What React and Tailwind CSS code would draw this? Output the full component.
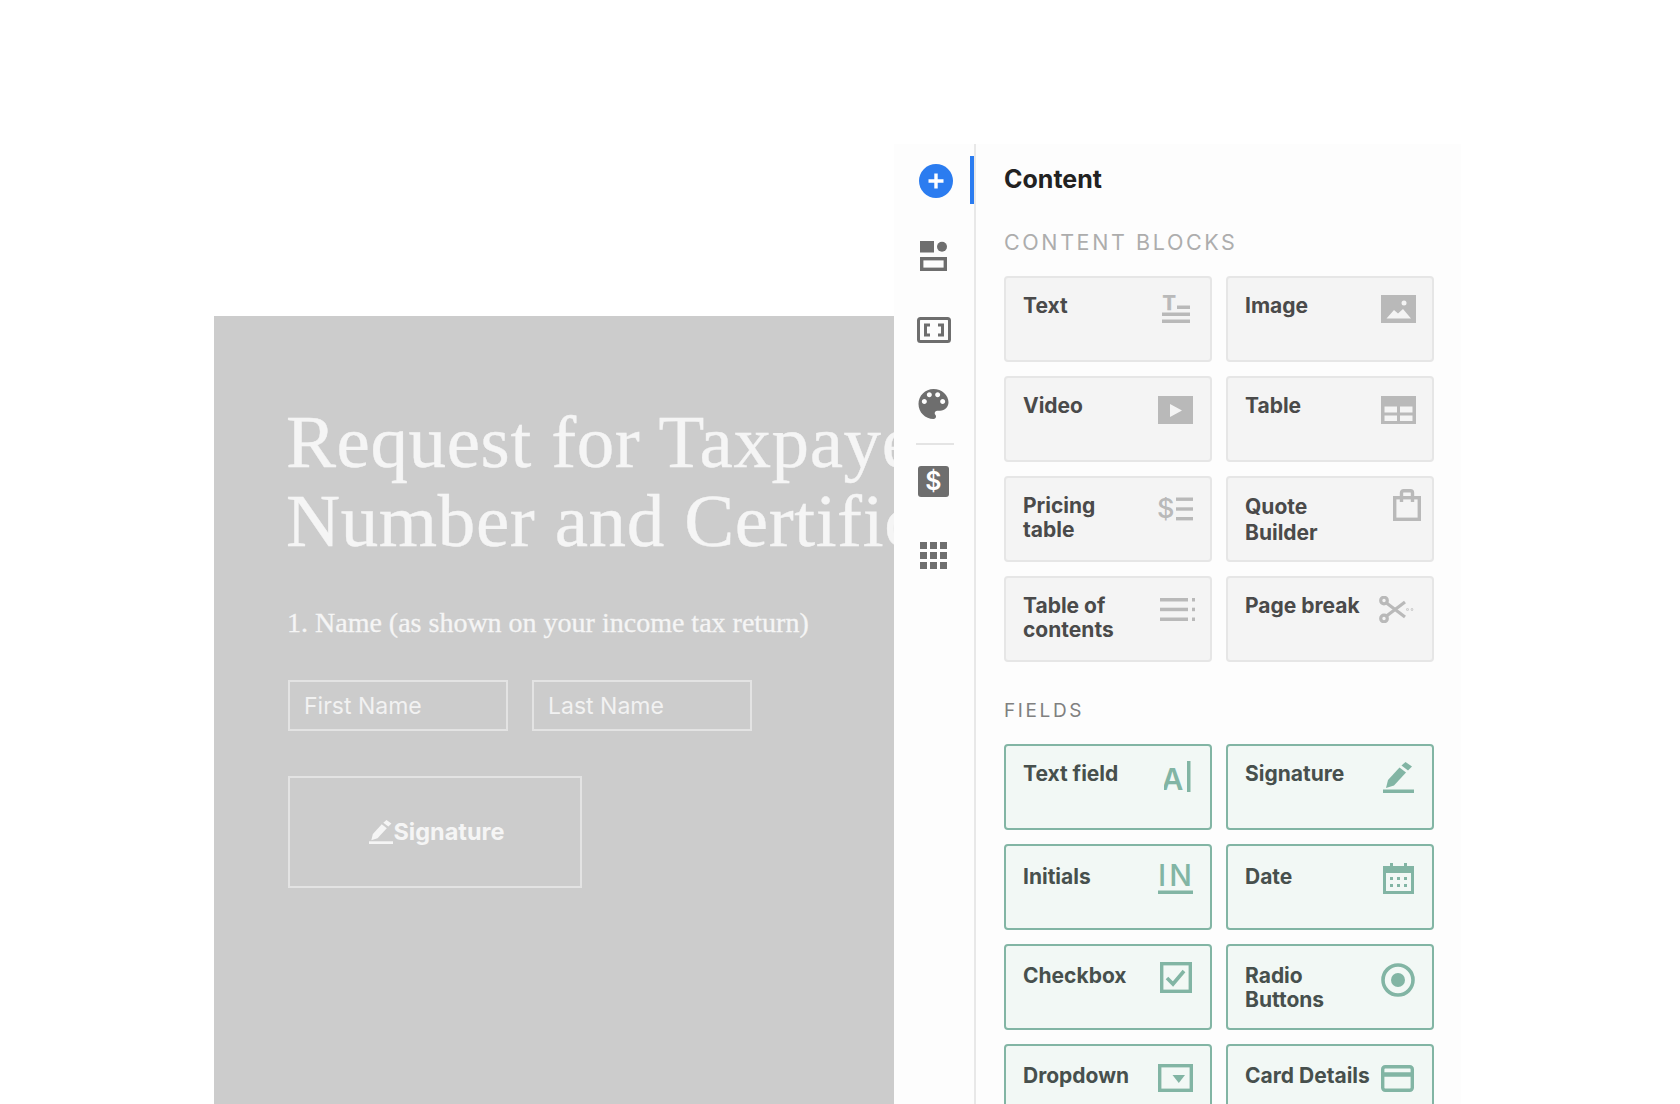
import React from "react";

const GRAY = "#b9b9b9";
const GREEN = "#82b5a4";
const SIDE = "#6e6e6e";
const CARD_BG = "#f4f4f4";
const GREEN_BG = "#f2f8f5";
const ui = "font-['Inter',sans-serif]";

const TextIcon = () => (
  <svg className="mt-[17px] mr-[20px] w-[28px] h-[28px] shrink-0" viewBox="0 0 28 28">
    <text x="0.5" y="14.5" fontSize="20" fontWeight="700" fontFamily="Inter" fill={GRAY} stroke={GRAY} strokeWidth="0.6">T</text>
    <rect x="15" y="10.5" width="13" height="3.5" fill={GRAY} />
    <rect y="17.5" width="28" height="3.5" fill={GRAY} />
    <rect y="24.5" width="28" height="3.5" fill={GRAY} />
  </svg>
);

const ImageIcon = () => (
  <svg className="mt-[17px] mr-[16px] w-[35px] h-[28px] shrink-0" viewBox="0 0 35 28">
    <rect width="35" height="28" fill={GRAY} />
    <path d="M5.5 23.5 13 15l4 3.5 5-4.5 8 9.5z" fill={CARD_BG} />
    <circle cx="23" cy="8" r="2.5" fill={CARD_BG} />
  </svg>
);

const VideoIcon = () => (
  <svg className="mt-[18px] mr-[17px] w-[35px] h-[28px] shrink-0" viewBox="0 0 35 28">
    <rect width="35" height="28" fill={GRAY} />
    <path d="M12 8 24 14.5 12 21z" fill={CARD_BG} />
  </svg>
);

const TableIcon = () => (
  <svg className="mt-[18px] mr-[16px] w-[35px] h-[28px] shrink-0" viewBox="0 0 35 28">
    <rect width="35" height="28" fill={GRAY} />
    <rect x="3.5" y="10.5" width="12.5" height="6" fill={CARD_BG} />
    <rect x="19" y="10.5" width="12.5" height="6" fill={CARD_BG} />
    <rect x="3.5" y="19.5" width="12.5" height="5.5" fill={CARD_BG} />
    <rect x="19" y="19.5" width="12.5" height="5.5" fill={CARD_BG} />
  </svg>
);

const PricingIcon = () => (
  <svg className="mt-[19px] mr-[17px] w-[35px] h-[24px] shrink-0" viewBox="0 0 35 24">
    <text x="-1" y="21" fontSize="27" fontWeight="500" fontFamily="Inter" fill={GRAY}>$</text>
    <rect x="18" y="0.5" width="17" height="3.4" fill={GRAY} />
    <rect x="18" y="10.3" width="17" height="3.4" fill={GRAY} />
    <rect x="18" y="20" width="17" height="3.4" fill={GRAY} />
  </svg>
);

const BagIcon = () => (
  <svg className="mt-[11px] mr-[11px] w-[28px] h-[32px] shrink-0" viewBox="0 0 28 32" fill="none" stroke={GRAY} strokeWidth="3.4">
    <rect x="1.7" y="8.7" width="24.6" height="21.6" />
    <path d="M8.5 13V3.7a2 2 0 0 1 2-2h7a2 2 0 0 1 2 2V13" />
  </svg>
);

const TocIcon = () => (
  <svg className="mt-[20px] mr-[15px] w-[35px] h-[23px] shrink-0" viewBox="0 0 35 23" fill={GRAY}>
    <rect width="28" height="3.5" />
    <rect y="9.7" width="28" height="3.5" />
    <rect y="19.5" width="28" height="3.5" />
    <rect x="32" width="3" height="3.5" />
    <rect x="32" y="9.7" width="3" height="3.5" />
    <rect x="32" y="19.5" width="3" height="3.5" />
  </svg>
);

const ScissorsIcon = () => (
  <svg className="mt-[18px] mr-[18px] w-[35px] h-[27px] shrink-0" viewBox="0 0 35 27" fill="none" stroke={GRAY} strokeWidth="3.2">
    <circle cx="5" cy="4.5" r="3.3" />
    <circle cx="5" cy="22.5" r="3.3" />
    <path d="M7.5 7 26 21M7.5 20 26 6" />
    <circle cx="28.5" cy="13.5" r="0.3" fill={GRAY} strokeWidth="2" />
    <circle cx="33" cy="13.5" r="0.3" fill={GRAY} strokeWidth="2" />
  </svg>
);

const TextFieldIcon = () => (
  <svg className="mt-[15px] mr-[18px] w-[28px] h-[32px] shrink-0" viewBox="0 0 28 32">
    <text x="-2.5" y="29" fontSize="30" fontWeight="600" fontFamily="Inter" fill={GREEN}>A</text>
    <rect x="23" y="0" width="3.5" height="31" fill={GREEN} />
  </svg>
);

const SignaturePath = () => (
  <>
    <path d="M3 26 5 18 16.5 5.5 23 10.5 11 23.5z" />
    <path d="M18.5 3.5 22.5 0 29 4.5 25 8.5z" />
    <rect y="27.5" width="31" height="3.5" />
  </>
);

const SignatureIcon = () => (
  <svg className="mt-[16px] mr-[18px] w-[31px] h-[31px] shrink-0" viewBox="0 0 31 31" fill={GREEN}>
    <SignaturePath />
  </svg>
);

const InitialsIcon = () => (
  <svg className="mt-[18px] mr-[17px] w-[35px] h-[30px] shrink-0" viewBox="0 0 35 30">
    <text x="0" y="22" fontSize="30" fontWeight="500" letterSpacing="3" fontFamily="Inter" fill={GREEN}>IN</text>
    <rect y="26.5" width="35" height="3.5" fill={GREEN} />
  </svg>
);

const DateIcon = () => (
  <svg className="mt-[17px] mr-[18px] w-[31px] h-[31px] shrink-0" viewBox="0 0 31 31" fill={GREEN}>
    <path d="M0 3h7V0h3v3h11V0h3v3h7v28H0z" />
    <rect x="3" y="10" width="25" height="18" fill={GREEN_BG} />
    {[7, 14, 21].map((x) =>
      [14, 21].map((y) => <rect key={`${x}-${y}`} x={x} y={y} width="3" height="3" />)
    )}
  </svg>
);

const CheckboxIcon = () => (
  <svg className="mt-[16px] mr-[18px] w-[32px] h-[31px] shrink-0" viewBox="0 0 32 31" fill="none" stroke={GREEN}>
    <rect x="1.7" y="1.7" width="28.6" height="27.6" strokeWidth="3.4" />
    <path d="M7 16l6 6L24 9" strokeWidth="3.6" />
  </svg>
);

const RadioIcon = () => (
  <svg className="mt-[17px] mr-[17px] w-[34px] h-[34px] shrink-0" viewBox="0 0 34 34">
    <circle cx="17" cy="17" r="15" fill="none" stroke={GREEN} strokeWidth="3.6" />
    <circle cx="17" cy="17" r="7" fill={GREEN} />
  </svg>
);

const DropdownIcon = () => (
  <svg className="mt-[18px] mr-[17px] w-[35px] h-[28px] shrink-0" viewBox="0 0 35 28">
    <rect x="1.7" y="1.7" width="31.6" height="24.6" fill="none" stroke={GREEN} strokeWidth="3.4" />
    <path d="M14.5 11h12.5l-6.2 8z" fill={GREEN} />
  </svg>
);

const CardIcon = () => (
  <svg className="mt-[19px] mr-[18px] w-[33px] h-[27px] shrink-0" viewBox="0 0 33 27" fill="none" stroke={GREEN} strokeWidth="3.4">
    <rect x="1.7" y="1.7" width="29.6" height="23.6" rx="2.5" />
    <path d="M1.5 9.5h30" strokeWidth="4.5" />
  </svg>
);

const blocks = [
  { label: "Text", icon: <TextIcon /> },
  { label: "Image", icon: <ImageIcon /> },
  { label: "Video", icon: <VideoIcon /> },
  { label: "Table", icon: <TableIcon /> },
  { label: "Pricing\ntable", icon: <PricingIcon /> },
  { label: "Quote\nBuilder", icon: <BagIcon />, loose: true },
  { label: "Table of\ncontents", icon: <TocIcon /> },
  { label: "Page break", icon: <ScissorsIcon /> },
];

const fields = [
  { label: "Text field", icon: <TextFieldIcon /> },
  { label: "Signature", icon: <SignatureIcon /> },
  { label: "Initials", icon: <InitialsIcon />, low: "pt-[19px]" },
  { label: "Date", icon: <DateIcon />, low: "pt-[19px]" },
  { label: "Checkbox", icon: <CheckboxIcon />, low: "pt-[18px]" },
  { label: "Radio\nButtons", icon: <RadioIcon />, low: "pt-[18px]" },
  { label: "Dropdown", icon: <DropdownIcon />, low: "pt-[18px]" },
  { label: "Card Details", icon: <CardIcon />, low: "pt-[18px]" },
];

const Tile = ({ label, icon, green, loose, low }) => (
  <div
    className={`flex justify-between h-[86px] rounded-[4px] border-2 ${
      green ? "bg-[#f2f8f5] border-[#82b5a4] text-[#47504d]" : "bg-[#f4f4f4] border-[#e6e6e6] text-[#4a4a4a]"
    }`}
  >
    <div
      className={`pl-[17px] text-[21px] font-[650] whitespace-pre-line ${low || "pt-[16px]"} ${
        loose ? "leading-[26px]" : "leading-[24px]"
      }`}
    >
      {label}
    </div>
    {icon}
  </div>
);

const Sidebar = () => (
  <aside className="w-[80px] mt-[144px] shrink-0 bg-[#fdfdfd] flex flex-col">
    <div className="mt-[12px] h-[48px] flex items-center justify-between">
      <div className="ml-[25px] mt-[1px] w-[34px] h-[34px] rounded-full bg-[#2b7cf0] flex items-center justify-center">
        <svg className="w-[18px] h-[18px]" viewBox="0 0 18 18" fill="none" stroke="#fff" strokeWidth="3.4">
          <path d="M9 1.5v15M1.5 9h15" />
        </svg>
      </div>
      <div className="w-[4px] h-[48px] bg-[#2b7cf0]" />
    </div>

    <svg className="mt-[37px] ml-[26px] w-[27px] h-[30px]" viewBox="0 0 27 30" fill={SIDE}>
      <rect width="14" height="11.5" />
      <circle cx="22" cy="5.8" r="5" />
      <rect x="1.7" y="17.7" width="23.6" height="10.6" fill="none" stroke={SIDE} strokeWidth="3.4" />
    </svg>

    <svg className="mt-[46px] ml-[23px] w-[34px] h-[26px]" viewBox="0 0 34 26" fill="none" stroke={SIDE} strokeWidth="3">
      <rect x="1.5" y="1.5" width="31" height="23" rx="2" />
      <path d="M13 8H8.5v10H13M21 8h4.5v10H21" />
    </svg>

    <svg className="mt-[46px] ml-[24px] w-[31px] h-[30px]" viewBox="3 3 18 18" fill={SIDE}>
      <path d="M12 3c-4.97 0-9 4.03-9 9s4.03 9 9 9c.83 0 1.5-.67 1.5-1.5 0-.39-.15-.74-.39-1.01-.23-.26-.38-.61-.38-.99 0-.83.67-1.5 1.5-1.5H16c2.76 0 5-2.24 5-5 0-4.42-4.03-8-9-8zm-5.5 9c-.83 0-1.5-.67-1.5-1.5S5.67 9 6.5 9 8 9.67 8 10.5 7.33 12 6.5 12zm3-4C8.67 8 8 7.33 8 6.5S8.67 5 9.5 5s1.5.67 1.5 1.5S10.33 8 9.5 8zm5 0c-.83 0-1.5-.67-1.5-1.5S13.67 5 14.5 5s1.5.67 1.5 1.5S15.33 8 14.5 8zm3 4c-.83 0-1.5-.67-1.5-1.5S16.67 9 17.5 9s1.5.67 1.5 1.5-.67 1.5-1.5 1.5z" />
    </svg>

    <div className="mt-[24px] ml-[22px] w-[38px] h-[2px] bg-[#e4e4e4]" />

    <div className="mt-[21px] ml-[24px] w-[31px] h-[31px] rounded-[3px] bg-[#6e6e6e] text-white text-[25px] leading-[31px] font-semibold text-center">
      $
    </div>

    <svg className="mt-[45px] ml-[26px] w-[27px] h-[27px]" viewBox="0 0 27 27" fill={SIDE}>
      {[0, 10, 20].map((x) =>
        [0, 10, 20].map((y) => <rect key={`${x}-${y}`} x={x} y={y} width="7" height="7" />)
      )}
    </svg>
  </aside>
);

const Document = () => (
  <section className="w-[680px] mt-[316px] shrink-0 h-[788px] overflow-hidden bg-[#cccccc] pl-[74px] pt-[86px] text-[#f5f5f5]">
    <h1 className="-ml-[2px] font-['Liberation_Serif',serif] text-[75px] leading-[79px] tracking-[0.6px] font-normal whitespace-nowrap [-webkit-text-stroke:0.4px_#f5f5f5]">
      Request for Taxpayer Identification
      <br />
      Number and Certification
    </h1>
    <p className="mt-[48px] -ml-[1px] font-['Liberation_Serif',serif] text-[28px] leading-[30px] whitespace-nowrap [-webkit-text-stroke:0.3px_#f5f5f5]">
      1. Name (as shown on your income tax return)
    </p>
    <div className="mt-[42px] flex gap-[24px]">
      <div className="w-[220px] h-[51px] border-2 border-[#e3e3e3] pl-[14px] text-[23px] leading-[49px] text-[#f2f2f2]">First Name</div>
      <div className="w-[220px] h-[51px] border-2 border-[#e3e3e3] pl-[14px] text-[23px] leading-[49px] text-[#f2f2f2]">Last Name</div>
    </div>
    <div className="mt-[45px] w-[294px] h-[112px] border-2 border-[#e3e3e3] flex items-center justify-center pl-[4px] text-[23.5px] font-bold">
      <svg className="w-[24px] h-[24px]" viewBox="0 0 31 31" fill="#f5f5f5">
        <SignaturePath />
      </svg>
      Signature
    </div>
  </section>
);

const Panel = () => (
  <section className="w-[487px] mt-[144px] shrink-0 h-[960px] overflow-hidden bg-[#fdfdfd] border-l-2 border-[#e8e8e8] pl-[28px] pt-[19px]">
    <h2 className="text-[25px] leading-[32px] font-[650] text-[#222222]">Content</h2>
    <h3 className="mt-[34px] text-[21.5px] leading-[26px] tracking-[2.6px] text-[#adadad]">CONTENT BLOCKS</h3>
    <div className="mt-[21px] w-[430px] grid grid-cols-2 gap-x-[14px] gap-y-[14px]">
      {blocks.map((b) => (
        <Tile key={b.label} {...b} />
      ))}
    </div>
    <h3 className="mt-[36px] text-[19px] leading-[26px] tracking-[2.6px] text-[#808080]">FIELDS</h3>
    <div className="mt-[20px] w-[430px] grid grid-cols-2 gap-x-[14px] gap-y-[14px]">
      {fields.map((f) => (
        <Tile key={f.label} {...f} green />
      ))}
    </div>
  </section>
);

export default function App() {
  return (
    <div className={`w-[1680px] h-[1104px] overflow-hidden bg-white flex pl-[214px] ${ui}`}>
      <Document />
      <Sidebar />
      <Panel />
    </div>
  );
}
